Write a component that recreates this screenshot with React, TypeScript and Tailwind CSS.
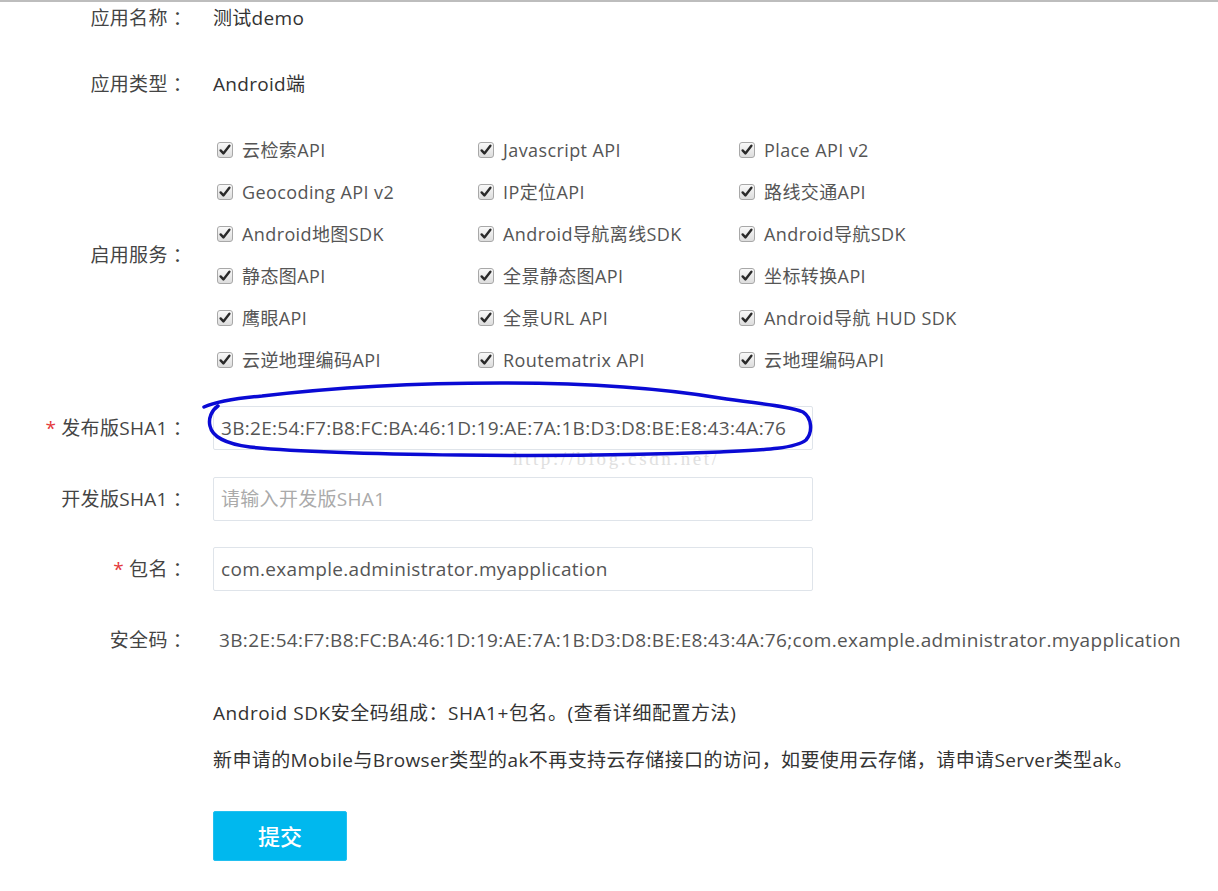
import React from "react";

const font = { fontFamily: '"Open Sans", "Noto Sans CJK SC", sans-serif' };

const services = [
  "云检索API", "Javascript API", "Place API v2",
  "Geocoding API v2", "IP定位API", "路线交通API",
  "Android地图SDK", "Android导航离线SDK", "Android导航SDK",
  "静态图API", "全景静态图API", "坐标转换API",
  "鹰眼API", "全景URL API", "Android导航 HUD SDK",
  "云逆地理编码API", "Routematrix API", "云地理编码API",
];

function Check() {
  return (
    <svg width="16" height="16" viewBox="0 0 16 16" className="shrink-0">
      <defs>
        <linearGradient id="cbg" x1="0" y1="0" x2="0" y2="1">
          <stop offset="0" stopColor="#fafafa" />
          <stop offset="1" stopColor="#dcdcdc" />
        </linearGradient>
      </defs>
      <rect x="0.5" y="0.5" width="15" height="15" rx="2.5" fill="url(#cbg)" stroke="#a8a8a8" />
      <path d="M3.6 8.4 L6.4 11.4 L12.4 3.8" fill="none" stroke="#2a2a2a" strokeWidth="2.4" strokeLinecap="round" strokeLinejoin="round" />
    </svg>
  );
}

function Label({ children, req }: { children: React.ReactNode; req?: boolean }) {
  return (
    <div className="w-[192px] shrink-0 text-right text-[#444] text-[19px] tracking-[0.3px]">
      {req && <span className="text-[#e4393c] mr-[5px]">*</span>}
      {children}
      <span className="ml-[5px]">：</span>
    </div>
  );
}

export default function App() {
  return (
    <div className="relative w-[1218px] h-[891px] bg-white overflow-hidden text-[18px] text-[#444]" style={font}>
      <div className="h-[2px] bg-[#bdbdbd]" />
      <div className="flex flex-col -mt-[2px]">
        <div className="flex items-center h-[36px]">
          <Label>应用名称</Label>
          <div className="ml-[21px] text-[#333] text-[19px] tracking-[0.3px]">测试demo</div>
        </div>
        <div className="flex items-center h-[36px] mt-[30px]">
          <Label>应用类型</Label>
          <div className="ml-[21px] text-[#333] text-[19px] tracking-[0.3px]">Android端</div>
        </div>
        <div className="flex items-center mt-[27px]">
          <Label>启用服务</Label>
          <div className="ml-[25px] grid grid-cols-[261px_261px_261px]">
            {services.map((s) => (
              <div key={s} className="flex items-center h-[42px] gap-[9px] text-[#555] tracking-[0.4px]">
                <Check />
                <span>{s}</span>
              </div>
            ))}
          </div>
        </div>
        <div className="flex items-center mt-[25px]">
          <Label req>发布版SHA1</Label>
          <div className="ml-[21px] w-[600px] h-[44px] border border-[#dfe4ea] rounded-[2px] flex items-center px-[7px] text-[#555] text-[19px] tracking-[0.3px] whitespace-nowrap">
            3B:2E:54:F7:B8:FC:BA:46:1D:19:AE:7A:1B:D3:D8:BE:E8:43:4A:76
          </div>
        </div>
        <div className="flex items-center mt-[27px]">
          <Label>开发版SHA1</Label>
          <div className="ml-[21px] w-[600px] h-[44px] border border-[#dfe4ea] rounded-[2px] flex items-center px-[7px] text-[#aaa] text-[19px] tracking-[0.3px]">
            请输入开发版SHA1
          </div>
        </div>
        <div className="flex items-center mt-[26px]">
          <Label req>包名</Label>
          <div className="ml-[21px] w-[600px] h-[44px] border border-[#dfe4ea] rounded-[2px] flex items-center px-[7px] text-[#555] text-[19px] tracking-[0.3px]">
            com.example.administrator.myapplication
          </div>
        </div>
        <div className="flex items-center h-[36px] mt-[31px]">
          <Label>安全码</Label>
          <div className="ml-[27px] text-[#555] whitespace-nowrap text-[19px] tracking-[0.35px]">
            3B:2E:54:F7:B8:FC:BA:46:1D:19:AE:7A:1B:D3:D8:BE:E8:43:4A:76;com.example.administrator.myapplication
          </div>
        </div>
        <div className="pl-[213px] flex flex-col">
          <div className="h-[36px] flex items-center mt-[37px] text-[#333] text-[19px] tracking-[0.55px] whitespace-nowrap">Android SDK安全码组成：SHA1+包名。(查看详细配置方法)</div>
          <div className="h-[36px] flex items-center mt-[11px] text-[#333] whitespace-nowrap text-[19px] tracking-[0.4px]">
            新申请的Mobile与Browser类型的ak不再支持云存储接口的访问，如要使用云存储，请申请Server类型ak。
          </div>
          <button className="mt-[33px] w-[134px] h-[50px] bg-[#00b8ee] rounded-[2px] border border-[#22c0f0] text-white text-[22px] font-medium flex items-center justify-center">
            提交
          </button>
        </div>
      </div>

      <div className="absolute left-[513px] top-[445px] text-[19px] text-[#e0e0e0] tracking-[2.6px] pointer-events-none" style={{ fontFamily: '"Liberation Serif", serif' }}>
        http://blog.csdn.net/
      </div>

      <svg className="absolute left-0 top-0 pointer-events-none" width="1218" height="891">
        <path
          d="M204 407 C215 402 240 398 262 396 C330 388 420 383 500 383 C580 383 660 388 720 398 C760 404 790 406 803 412 C812 418 813 432 806 440 C795 449 760 450 720 452 C640 455 540 456 460 455 C380 454 300 452 250 447 C225 444 212 436 210 426 C208 418 212 410 218 406"
          fill="none"
          stroke="#0a0ad4"
          strokeWidth="3.5"
          strokeLinecap="round"
          strokeLinejoin="round"
        />
      </svg>
    </div>
  );
}
